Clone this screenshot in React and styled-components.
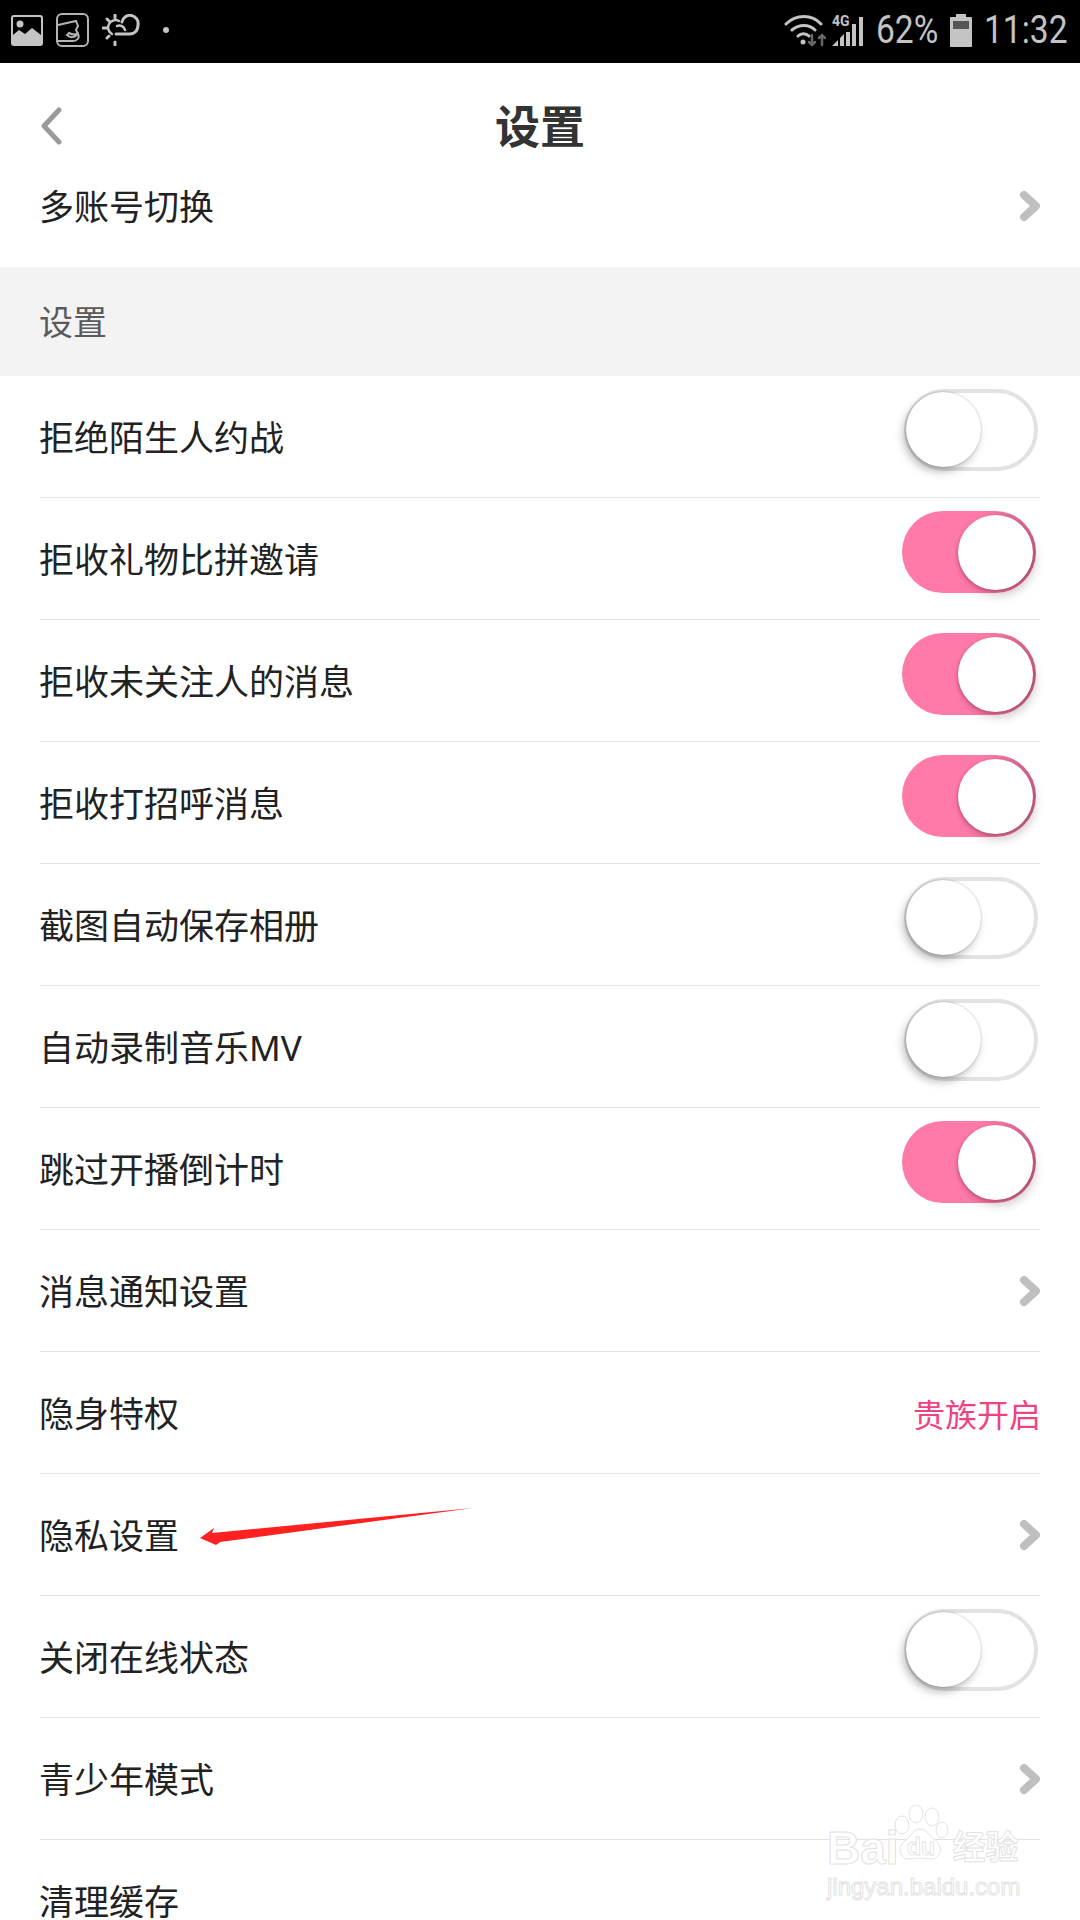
import React from "react";
import styled, { createGlobalStyle } from "styled-components";

const GlobalStyle = createGlobalStyle`
  html, body {
    margin: 0;
    padding: 0;
    background: #fff;
  }
  * {
    box-sizing: border-box;
  }
`;

const Page = styled.div`
  position: relative;
  width: 1080px;
  height: 1920px;
  overflow: hidden;
  background: #fff;
  font-family: "Noto Sans", "Noto Sans CJK SC", sans-serif;
`;

const StatusBar = styled.div`
  height: 63px;
  background: #000;
  color: #c4c4c4;
  display: flex;
  align-items: center;
  justify-content: space-between;
  padding: 0 14px 3px 11px;
`;

const StatusGroup = styled.div`
  display: flex;
  align-items: center;
  gap: ${(p) => p.$gap || 0}px;
`;

const StatusDot = styled.span`
  width: 6px;
  height: 6px;
  border-radius: 50%;
  background: #c4c4c4;
  margin-left: 10px;
`;

const NetworkType = styled.span`
  position: absolute;
  left: 0;
  top: 0;
  font: 700 14px/14px "Roboto", sans-serif;
  color: #c4c4c4;
`;

const SignalBox = styled.div`
  position: relative;
  width: 32px;
  height: 32px;
  margin: 0 2px 0 6px;
`;

const StatusText = styled.span`
  font: 400 39px/40px "Roboto", sans-serif;
  display: inline-block;
  width: ${(p) => p.$width}px;
  margin-left: ${(p) => p.$offset}px;
  white-space: nowrap;
  transform: scaleX(${(p) => p.$squeeze});
  transform-origin: left center;
`;

const Nav = styled.div`
  height: 88px;
  padding-top: 41px;
  position: relative;
  display: flex;
  justify-content: center;
`;

const BackIcon = styled.svg`
  position: absolute;
  left: 40px;
  top: 44px;
`;

const Title = styled.h1`
  margin: 0;
  font-size: 45px;
  line-height: 46px;
  font-weight: 700;
  color: #333;
`;

const Row = styled.div`
  height: ${(p) => (p.$first ? 116 : 122)}px;
  margin: 0 40px;
  padding-bottom: ${(p) => (p.$first ? 6 : 0)}px;
  display: flex;
  align-items: center;
  justify-content: space-between;
  border-bottom: ${(p) => (p.$first ? "none" : "1px solid #e2e2e2")};
`;

const RowLabel = styled.span`
  font-size: 35px;
  line-height: 44px;
  color: #222;
  margin: 2px 0 0 -1px;
`;

const SectionBand = styled.div`
  height: 109px;
  background: #f3f3f3;
  padding: 0 0 2px 39px;
  display: flex;
  align-items: center;
  font-size: 34px;
  color: #5a5a5a;
`;

const Chevron = styled.svg`
  display: block;
  margin-right: -1px;
`;

const VipLink = styled.span`
  font-size: 32px;
  color: #ee4380;
  margin-right: -1px;
`;

const Track = styled.div`
  position: relative;
  width: 134px;
  height: 82px;
  margin: 0 ${(p) => (p.$on ? 4 : 2)}px 14px 0;
  border-radius: 41px;
  background: ${(p) =>
    p.$on ? "linear-gradient(90deg, #ff7aa8 60%, #cf6188 100%)" : "#fff"};
  border: ${(p) => (p.$on ? "none" : "4px solid #e2e2e2")};
`;

const Knob = styled.span`
  position: absolute;
  width: 75px;
  height: 75px;
  border-radius: 50%;
  background: #fff;
  top: ${(p) => (p.$on ? 4 : -1)}px;
  left: ${(p) => (p.$on ? 56 : -2)}px;
  box-shadow: ${(p) =>
    p.$on
      ? "-1px 1px 3px rgba(120, 30, 70, 0.35), 3px 6px 9px rgba(60, 20, 40, 0.2)"
      : "-3px 5px 9px rgba(0, 0, 0, 0.26), 0 0 2px rgba(0, 0, 0, 0.28)"};
`;

const ArrowMark = styled.svg`
  position: absolute;
  left: 195px;
  top: 1503px;
`;

const Watermark = styled.div`
  position: absolute;
  left: 827px;
  top: 1805px;
  width: 200px;
  display: flex;
  flex-direction: column;
`;

const WatermarkTop = styled.div`
  display: flex;
  align-items: flex-end;
  height: 62px;
`;

const WatermarkWord = styled.span`
  font: 700 ${(p) => p.$size}px/38px "Liberation Sans", "Noto Sans CJK SC", sans-serif;
  color: #fff;
  -webkit-text-stroke: 1px #e2e2e2;
  white-space: nowrap;
`;

const WatermarkUrl = styled.span`
  margin-top: 6px;
  font: 400 24px/28px "Liberation Sans", sans-serif;
  color: #fff;
  -webkit-text-stroke: 1px #e2e2e2;
  white-space: nowrap;
`;

const PawMark = styled.svg`
  margin: 0 -1px 0 -7px;
`;

const GalleryIcon = () => (
  <svg width="32" height="31" viewBox="0 0 32 31">
    <rect x="1" y="1" width="30" height="29" rx="2" fill="none" stroke="#c4c4c4" strokeWidth="2" />
    <circle cx="9" cy="9" r="3.5" fill="#c4c4c4" />
    <path d="M2 30V20l6-5 6 4 7-6 9 7v10z" fill="#c4c4c4" />
  </svg>
);

const FaceAppIcon = () => (
  <svg width="33" height="34" viewBox="0 0 33 34" fill="none" stroke="#b4b4b4" strokeWidth="2">
    <rect x="1" y="1" width="31" height="32" rx="5" />
    <path d="M2 12l18-4 2 5-2 4 2 4c2 4-1 7-5 7H2" />
    <path d="M11 22c3 3 8 3 10-1-3 1-6 0-8-1z" />
  </svg>
);

const WeatherIcon = () => (
  <svg width="38" height="32" viewBox="0 0 38 32" fill="none" stroke="#c4c4c4" strokeLinecap="round">
    <path d="M13 1v3M13 28v3M1 14h4M5 5l2 2M5 24l2-2" strokeWidth="3" />
    <path d="M10 20a7 7 0 0 1 7-13" strokeWidth="2.5" />
    <path d="M20 8a8 8 0 0 1 16 3c0 6-4 9-8 9H14" strokeWidth="3" />
    <path d="M15 12a6 6 0 0 1 8 4" strokeWidth="2.5" />
  </svg>
);

const WifiIcon = () => (
  <svg width="42" height="34" viewBox="0 0 42 34" fill="none" strokeLinecap="round">
    <path d="M2 11c10-10 26-10 35 0M8 17c7-6 17-6 23 0M14 23c3-3 8-3 11 0" stroke="#c4c4c4" strokeWidth="3" />
    <circle cx="19" cy="29" r="2.5" fill="#c4c4c4" />
    <path d="M28 22v10M25 29l3 3 3-3" stroke="#666" strokeWidth="2.5" />
    <path d="M38 32V22M35 25l3-3 3 3" stroke="#666" strokeWidth="2.5" />
  </svg>
);

const SignalBars = styled.svg`
  position: absolute;
  left: 0;
  top: 0;
`;

const SignalIcon = () => (
  <SignalBars width="32" height="32" viewBox="0 0 32 32" fill="#c4c4c4">
    <path d="M0 32l6-6v6zM8 24l4-4v12H8zM14 18h4v14h-4zM20 10h4v22h-4zM27 3h4v29h-4z" />
  </SignalBars>
);

const BatteryIcon = () => (
  <svg width="22" height="33" viewBox="0 0 22 33">
    <path d="M6 0h10v3h5a1 1 0 0 1 1 1v28a1 1 0 0 1-1 1H1a1 1 0 0 1-1-1V4a1 1 0 0 1 1-1h5z" fill="#c4c4c4" />
    <rect x="3" y="7" width="16" height="8" fill="#555" />
  </svg>
);

const ChevronRight = () => (
  <Chevron width="22" height="32" viewBox="0 0 22 32" fill="none">
    <path d="M5 5l12 11L5 27" stroke="#bfbfbf" strokeWidth="8" strokeLinecap="round" strokeLinejoin="round" />
  </Chevron>
);

const Toggle = ({ on }) => (
  <Track $on={on}>
    <Knob $on={on} />
  </Track>
);

const rows = [
  { label: "拒绝陌生人约战", toggle: false },
  { label: "拒收礼物比拼邀请", toggle: true },
  { label: "拒收未关注人的消息", toggle: true },
  { label: "拒收打招呼消息", toggle: true },
  { label: "截图自动保存相册", toggle: false },
  { label: "自动录制音乐MV", toggle: false },
  { label: "跳过开播倒计时", toggle: true },
  { label: "消息通知设置", chevron: true },
  { label: "隐身特权", vip: "贵族开启" },
  { label: "隐私设置", chevron: true },
  { label: "关闭在线状态", toggle: false },
  { label: "青少年模式", chevron: true },
  { label: "清理缓存" },
];

const App = () => {
  return (
    <Page>
      <GlobalStyle />
      <StatusBar>
        <StatusGroup $gap={13}>
          <GalleryIcon />
          <FaceAppIcon />
          <WeatherIcon />
          <StatusDot />
        </StatusGroup>
        <StatusGroup>
          <WifiIcon />
          <SignalBox>
            <NetworkType>4G</NetworkType>
            <SignalIcon />
          </SignalBox>
          <StatusText $width={74} $offset={10} $squeeze={0.86}>
            62%
          </StatusText>
          <BatteryIcon />
          <StatusText $width={82} $offset={12} $squeeze={0.86}>
            11:32
          </StatusText>
        </StatusGroup>
      </StatusBar>

      <Nav>
        <BackIcon width="24" height="38" viewBox="0 0 24 38" fill="none">
          <path d="M19 3L4 19l15 16" stroke="#9a9a9a" strokeWidth="5" strokeLinecap="round" strokeLinejoin="round" />
        </BackIcon>
        <Title>设置</Title>
      </Nav>

      <Row $first>
        <RowLabel>多账号切换</RowLabel>
        <ChevronRight />
      </Row>

      <SectionBand>设置</SectionBand>

      {rows.map((row) => (
        <Row key={row.label}>
          <RowLabel>{row.label}</RowLabel>
          {row.toggle !== undefined && <Toggle on={row.toggle} />}
          {row.chevron && <ChevronRight />}
          {row.vip && <VipLink>{row.vip}</VipLink>}
        </Row>
      ))}

      <ArrowMark width="285" height="50" viewBox="195 1503 285 50">
        <path d="M200 1538l14-10-2 5 261-25-253 34-4 3z" fill="#ff2020" />
      </ArrowMark>

      <Watermark>
        <WatermarkTop>
          <WatermarkWord $size={46}>Bai</WatermarkWord>
          <PawMark width="62" height="62" viewBox="0 0 62 62" fill="#fff" stroke="#e2e2e2" strokeWidth="1">
            <ellipse cx="10" cy="20" rx="7" ry="9" />
            <ellipse cx="24" cy="9" rx="7" ry="9" />
            <ellipse cx="40" cy="12" rx="7" ry="9" />
            <ellipse cx="50" cy="25" rx="6" ry="8" />
            <path d="M28 24c7 0 10 8 15 11 6 4 7 12 3 16-4 5-10 2-18 2-7 0-14 3-18-2-4-5-2-12 3-15 6-4 8-12 15-12z" />
            <text x="29" y="50" fontFamily="Liberation Sans, sans-serif" fontSize="23" fontWeight="700" strokeWidth="0.8" textAnchor="middle">du</text>
          </PawMark>
          <WatermarkWord $size={33}>经验</WatermarkWord>
        </WatermarkTop>
        <WatermarkUrl>jingyan.baidu.com</WatermarkUrl>
      </Watermark>
    </Page>
  );
};

export default App;
